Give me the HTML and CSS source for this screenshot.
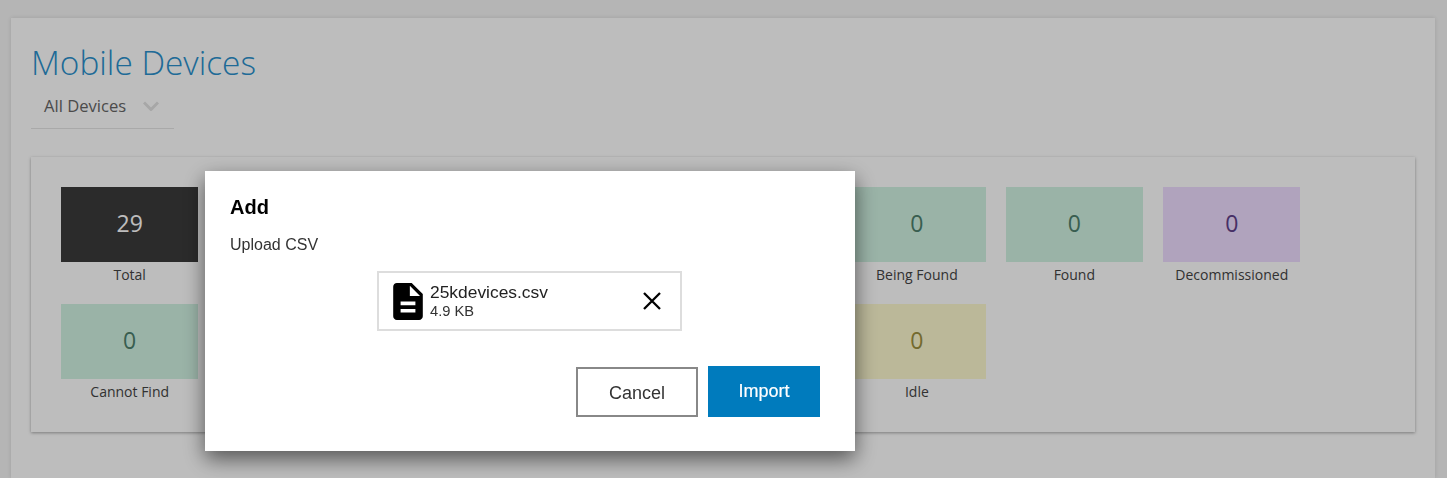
FILE: index.html
```html
<!DOCTYPE html>
<html lang="en">
<head>
<meta charset="UTF-8" />
<title>Mobile Devices</title>
<link rel="stylesheet" href="styles.css">
</head>
<body>

<div class="page-card">
  <h1>Mobile Devices</h1>
  <div class="device-select">
    <span>All Devices</span>
    <svg class="chevron" viewBox="0 0 16 10" width="16" height="10"><path d="M1 1.5l7 7 7-7" fill="none" stroke="#e2e2e2" stroke-width="3"/></svg>
  </div>

  <div class="stats-card">
    <div class="stat"><div class="tile tile-dark">29</div><div class="stat-label">Total</div></div>
    <div class="stat"></div>
    <div class="stat"></div>
    <div class="stat"></div>
    <div class="stat"></div>
    <div class="stat"><div class="tile tile-green">0</div><div class="stat-label">Being Found</div></div>
    <div class="stat"><div class="tile tile-green">0</div><div class="stat-label">Found</div></div>
    <div class="stat"><div class="tile tile-purple">0</div><div class="stat-label">Decommissioned</div></div>

    <div class="stat"><div class="tile tile-green">0</div><div class="stat-label">Cannot Find</div></div>
    <div class="stat"></div>
    <div class="stat"></div>
    <div class="stat"></div>
    <div class="stat"></div>
    <div class="stat"><div class="tile tile-yellow">0</div><div class="stat-label">Idle</div></div>
  </div>
</div>

<!-- Add dialog -->
<div class="overlay">
  <div class="modal">
    <h2>Add</h2>
    <div class="upload-label">Upload CSV</div>
    <div class="file-box">
      <svg class="file-icon" viewBox="4 2 16 20" width="30" height="37"><path d="M14 2H6c-1.1 0-2 .9-2 2v16c0 1.1.9 2 2 2h12c1.1 0 2-.9 2-2V8l-6-6zm2 16H8v-2h8v2zm0-4H8v-2h8v2zm-3-5V3.5L18.5 9H13z"/></svg>
      <div class="file-info">
        <div class="file-name">25kdevices.csv</div>
        <div class="file-size">4.9 KB</div>
      </div>
      <svg class="file-remove" viewBox="0 0 18 18" width="18" height="18"><path d="M1 1l16 16M17 1L1 17" fill="none" stroke="#000" stroke-width="2.3"/></svg>
    </div>
    <div class="modal-actions">
      <button class="btn-cancel">Cancel</button>
      <button class="btn-import">Import</button>
    </div>
  </div>
</div>

</body>
</html>
```

FILE: styles.css
```css
html, body {
  margin: 0;
  height: 100%;
  overflow: hidden;
}
body {
  background: #f4f4f4;
  font-family: "Open Sans", "Noto Sans", sans-serif;
  padding: 18px 12px 0 11px;
  box-sizing: border-box;
}

.page-card {
  background: #fff;
  height: 100%;
  box-sizing: border-box;
  padding: 23px 20px 0 20px;
  box-shadow: 0 0 4px rgba(0,0,0,0.12);
}
h1 {
  margin: 0;
  color: #2a90cc;
  font-size: 33.4px;
  font-weight: 300;
  line-height: 42px;
}
.device-select {
  display: flex;
  align-items: center;
  gap: 17px;
  width: 143px;
  height: 46px;
  box-sizing: border-box;
  padding-left: 13px;
  border-bottom: 1px solid #e4e4e4;
  color: #666;
  font-size: 16.6px;
}

.stats-card {
  display: grid;
  grid-template-columns: repeat(8, 137.4px);
  grid-auto-rows: 117px;
  column-gap: 20.05px;
  margin-top: 28px;
  padding: 30px 30px 10px 30px;
  height: 275px;
  box-sizing: border-box;
  background: #fff;
  box-shadow: 0 1px 3px rgba(0,0,0,0.35);
}
.tile {
  height: 75px;
  box-sizing: border-box;
  padding-bottom: 4px;
  display: flex;
  align-items: center;
  justify-content: center;
  font-size: 23px;
}
.tile-dark { background: #3a3a3a; color: #fff; }
.tile-green { background: #d0f2e2; color: #4d7f6c; }
.tile-purple { background: #eedcff; color: #61408a; }
.tile-yellow { background: #fcf8cf; color: #9c8f3f; }
.stat-label {
  margin-top: 3px;
  text-align: center;
  font-size: 14px;
  line-height: 20px;
  color: #444;
}

/* dialog */
.overlay {
  position: fixed;
  top: 0;
  left: 0;
  right: 0;
  bottom: 0;
  background: rgba(0,0,0,0.26);
  padding: 171px 0 0 205px;
  font-family: "Liberation Sans", Arial, sans-serif;
}
.modal {
  width: 650px;
  height: 280px;
  box-sizing: border-box;
  padding: 25px 35px 0 25px;
  background: #fff;
  box-shadow: 0 8px 20px rgba(0,0,0,0.55);
}
h2 {
  margin: 0;
  font-size: 20px;
  line-height: 23px;
  color: #000;
}
.upload-label {
  margin-top: 16px;
  font-size: 16px;
  line-height: 20px;
  color: #333;
}
.file-box {
  display: flex;
  align-items: center;
  width: 305px;
  height: 60px;
  margin: 16px 0 0 147px;
  padding: 0 19px 0 14px;
  box-sizing: border-box;
  border: 2px solid #ddd;
}
.file-icon { flex: none; }
.file-info {
  flex: 1;
  margin-left: 7px;
  padding-bottom: 1px;
  color: #222;
}
.file-name { font-size: 17.4px; line-height: 21px; }
.file-size { font-size: 14.7px; line-height: 17px; color: #333; }
.file-remove { flex: none; }

.modal-actions {
  display: flex;
  justify-content: flex-end;
  gap: 10px;
  margin-top: 35px;
}
button {
  font-family: inherit;
  font-size: 18px;
  cursor: pointer;
  border: none;
}
.btn-cancel {
  width: 122px;
  height: 50px;
  margin-top: 1px;
  padding-top: 3px;
  background: #fff;
  border: 2px solid #888;
  color: #333;
}
.btn-import {
  width: 112px;
  height: 51px;
  padding-bottom: 1px;
  background: #007bbd;
  color: #fff;
  -webkit-text-stroke: 0.2px #fff;
}
```
